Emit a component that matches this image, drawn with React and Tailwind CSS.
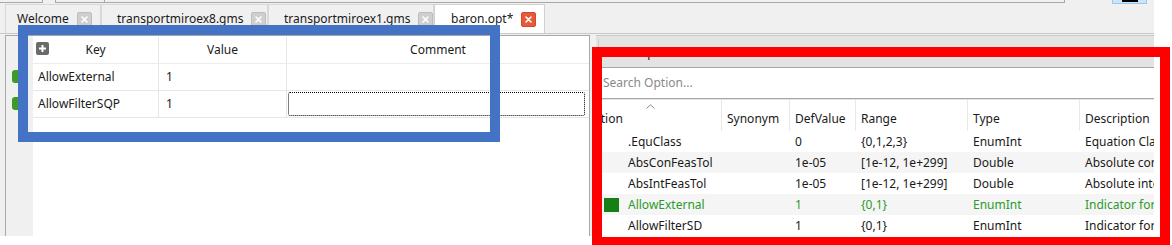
import React from 'react';

const font = { fontFamily: '"Noto Sans", "Open Sans", sans-serif' };

const CloseBox = ({ active }) => (
  <span
    className={`w-[15px] h-[15px] flex items-center justify-center rounded-[2px] border ${
      active ? 'bg-[#e45a3b] border-[#d9472a]' : 'bg-[#cfcfcf] border-[#bdbdbd]'
    }`}
  >
    <svg width="7" height="7" viewBox="0 0 7 7">
      <path d="M1 1L6 6M6 1L1 6" stroke="#fff" strokeWidth="1.6" strokeLinecap="round" />
    </svg>
  </span>
);

const Tab = ({ label, width, pad, active }) => (
  <div
    className={`h-full flex items-center gap-2 border-t border-l border-r ${
      active ? 'bg-white border-[#d0d0d0] h-[28px]' : 'bg-[#f0f0f0] border-[#d9d9d9] h-[26px]'
    }`}
    style={{ width, paddingLeft: pad }}
  >
    <span className="text-[12px] text-[#1a1a1a] leading-none">{label}</span>
    <CloseBox active={active} />
  </div>
);

const optionRows = [
  { name: '.EquClass', def: '0', range: '{0,1,2,3}', type: 'EnumInt', desc: 'Equation Class' },
  { name: 'AbsConFeasTol', def: '1e-05', range: '[1e-12, 1e+299]', type: 'Double', desc: 'Absolute constraint' },
  { name: 'AbsIntFeasTol', def: '1e-05', range: '[1e-12, 1e+299]', type: 'Double', desc: 'Absolute integrality' },
  { name: 'AllowExternal', def: '1', range: '{0,1}', type: 'EnumInt', desc: 'Indicator for', used: true },
  { name: 'AllowFilterSD', def: '1', range: '{0,1}', type: 'EnumInt', desc: 'Indicator for' },
];

const cols = 'grid grid-cols-[126px_68px_66px_112px_112px_160px]';

export default function App() {
  return (
    <div className="relative w-[1172px] h-[245px] bg-white overflow-hidden" style={font}>
      <div className="w-[1154px] h-[236px] bg-[#f0f0f0] flex flex-col">
        {/* strip of the widgets above */}
        <div className="h-[4px] flex items-start">
          <div className="w-[43px] h-[3px] border-b border-r border-[#a8a8a8]" />
          <div className="w-[50px] h-[3px] ml-[12px] border-b border-l border-r border-[#a8a8a8]" />
          <div className="w-[960px] h-[3px] border-b border-r border-[#a8a8a8]" />
          <div className="w-[35px] h-[4px] ml-[47px] bg-[#cce4f7] border-l border-r border-b border-[#99c8ef] flex justify-center">
            <div className="w-[16px] h-[2px] bg-black" />
          </div>
        </div>

        {/* tab bar */}
        <div className="h-[30px] flex items-end pl-[5px] border-b border-[#c8c8c8]">
          <Tab label="Welcome" width={96} pad={11} />
          <Tab label="transportmiroex8.gms" width={167} pad={15} />
          <Tab label="transportmiroex1.gms" width={166} pad={15} />
          <Tab label="baron.opt*" width={111} pad={16} active />
        </div>

        <div className="flex-1 flex pl-[5px] pt-[1px]">
          {/* left: edited options */}
          <div className="w-[585px] flex border-l border-r border-t border-[#a8a8a8]">
            <div className="w-[27px] bg-[#f0f0f0] pt-[34px] pl-[6px] flex flex-col gap-[14px]">
              <div className="w-[12px] h-[13px] rounded-[3px] bg-[#3e9b2b]" />
              <div className="w-[12px] h-[13px] rounded-[3px] bg-[#3e9b2b]" />
            </div>
            <div className="flex-1 bg-white pt-[1px] text-[12px] text-[#1a1a1a]">
              <div className="grid grid-cols-[126px_128px_1fr] h-[27px] border-b border-[#ececec]">
                <div className="relative flex items-center justify-center border-r border-[#e6e6e6]">
                  <span className="absolute left-[3px] top-[5px] w-[13px] h-[13px] rounded-[2px] bg-[#6a6a6a] flex items-center justify-center">
                    <svg width="9" height="9" viewBox="0 0 9 9">
                      <path d="M4.5 1v7M1 4.5h7" stroke="#fff" strokeWidth="2" />
                    </svg>
                  </span>
                  Key
                </div>
                <div className="flex items-center justify-center border-r border-[#e6e6e6]">Value</div>
                <div className="flex items-center justify-center">Comment</div>
              </div>
              <div className="grid grid-cols-[126px_128px_1fr] h-[27px] border-b border-[#e6e6e6]">
                <div className="flex items-center pl-[5px] border-r border-[#e6e6e6]">AllowExternal</div>
                <div className="flex items-center pl-[7px] border-r border-[#e6e6e6]">1</div>
                <div />
              </div>
              <div className="grid grid-cols-[126px_128px_1fr] h-[27px] border-b border-[#e6e6e6]">
                <div className="flex items-center pl-[5px] border-r border-[#e6e6e6]">AllowFilterSQP</div>
                <div className="flex items-center pl-[7px] border-r border-[#e6e6e6]">1</div>
                <div className="p-[1px] pr-[4px]">
                  <div className="h-full border border-dotted border-black rounded-[2px]" />
                </div>
              </div>
            </div>
          </div>

          {/* right: all options */}
          <div className="w-[558px] ml-[6px] flex flex-col bg-[#e3e3e3] border-t border-[#c8c8c8] overflow-hidden">
            <div className="h-[31px] flex items-end pl-[2px]">
              <div className="h-[28px] pl-[22px] flex items-center border-l border-[#c8c8c8] text-[12px] text-[#1a1a1a]">
                All Options
              </div>
            </div>
            <div className="h-[32px] bg-white border-y border-[#a8a8a8] flex items-center pl-[7px] text-[12px] text-[#8a8a8a]">
              Search Option...
            </div>
            <div className="flex-1 bg-white text-[12px] text-[#1a1a1a] mt-[1px]">
              <div className={`${cols} h-[31px]`}>
                <div className="relative flex items-center border-r border-[#e8e8e8]">
                  <svg className="absolute left-[50px] top-[4px]" width="9" height="5" viewBox="0 0 9 5">
                    <path d="M0.5 4.5L4.5 0.8L8.5 4.5" fill="none" stroke="#8a8a8a" strokeWidth="1" />
                  </svg>
                  <span className="ml-[-12px] pt-[6px]">Option</span>
                </div>
                {['Synonym', 'DefValue', 'Range', 'Type', 'Description'].map((h) => (
                  <div key={h} className="flex items-center pl-[5px] pt-[6px] border-r border-[#e8e8e8]">
                    {h}
                  </div>
                ))}
              </div>
              {optionRows.map((r, i) => (
                <div
                  key={r.name}
                  className={`${cols} h-[21px] items-center whitespace-nowrap ${
                    i % 2 === 1 ? 'bg-[#f5f5f5]' : 'bg-white'
                  } ${r.used ? 'text-[#2b9a2b]' : ''}`}
                >
                  <div className="flex items-center pl-[8px]">
                    <span className={`w-[15px] h-[14px] mr-[9px] ${r.used ? 'bg-[#168016]' : ''}`} />
                    {r.name}
                  </div>
                  <div />
                  <div className="pl-[5px]">{r.def}</div>
                  <div className="pl-[5px]">{r.range}</div>
                  <div className="pl-[5px]">{r.type}</div>
                  <div className="pl-[5px]">{r.desc}</div>
                </div>
              ))}
            </div>
          </div>
        </div>
      </div>

      {/* annotation boxes drawn over the screenshot */}
      <div className="absolute left-[18px] top-[25px] w-[482px] h-[117px] border-[10px] border-[#4472c4]" />
      <div className="absolute left-[592px] top-[47px] w-[578px] h-[200px] border-[10px] border-[#ff0000]" />
    </div>
  );
}
